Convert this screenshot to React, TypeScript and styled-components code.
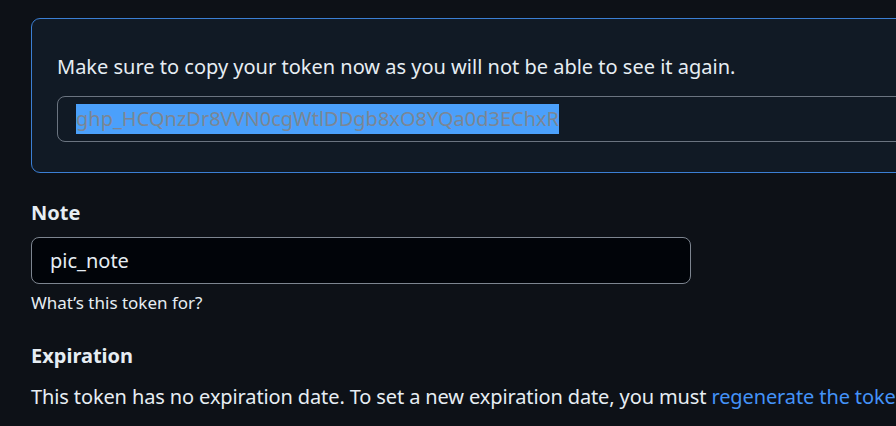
import React from "react";
import styled, { createGlobalStyle } from "styled-components";

const Global = createGlobalStyle`
  html, body { margin: 0; padding: 0; background: #0d1117; }
  body {
    font-family: "Noto Sans", "Open Sans", "Liberation Sans", sans-serif;
    color: #e6edf3;
    -webkit-font-smoothing: antialiased;
  }
`;

const Page = styled.div`
  width: 896px;
  height: 426px;
  overflow: hidden;
  padding: 18px 0 0 31px;
  box-sizing: border-box;
`;

const Flash = styled.div`
  margin-right: -60px;
  border: 1px solid #3b7fd4;
  border-radius: 9px;
  background: #111a25;
  padding: 33px 24px 30px 25px;
`;

const FlashText = styled.p`
  margin: 0 0 14px;
  font-size: 20px;
  line-height: 30px;
`;

const TokenField = styled.div`
  height: 46px;
  box-sizing: border-box;
  border: 1px solid #6b7480;
  border-radius: 8px;
  display: flex;
  align-items: center;
  padding-left: 18px;
`;

const Selected = styled.span`
  background: #4ba0fb;
  color: #7b8694;
  font-size: 20px;
  line-height: 30px;
`;

const Label = styled.div<{ $top: number }>`
  font-size: 20px;
  font-weight: 700;
  line-height: 28px;
  margin-top: ${(p) => p.$top}px;
`;

const Input = styled.div`
  width: 660px;
  height: 47px;
  box-sizing: border-box;
  margin-top: 10px;
  background: #010409;
  border: 1px solid #7d8590;
  border-radius: 8px;
  display: flex;
  align-items: center;
  padding-left: 18px;
  font-size: 20px;
`;

const Hint = styled.div`
  font-size: 17px;
  line-height: 24px;
  margin-top: 7px;
`;

const Body = styled.p`
  margin: 12px 0 0;
  font-size: 20px;
  line-height: 30px;
  letter-spacing: -0.12px;
  white-space: nowrap;
`;

const Link = styled.a`
  color: #4493f8;
  text-decoration: none;
`;

export default function App() {
  return (
    <>
      <Global />
      <Page>
        <Flash>
          <FlashText>Make sure to copy your token now as you will not be able to see it again.</FlashText>
          <TokenField>
            <Selected>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</Selected>
          </TokenField>
        </Flash>
        <Label $top={26}>Note</Label>
        <Input>pic_note</Input>
        <Hint>What’s this token for?</Hint>
        <Label $top={27}>Expiration</Label>
        <Body>
          This token has no expiration date. To set a new expiration date, you must{" "}
          <Link href="#">regenerate the token</Link>
        </Body>
      </Page>
    </>
  );
}
